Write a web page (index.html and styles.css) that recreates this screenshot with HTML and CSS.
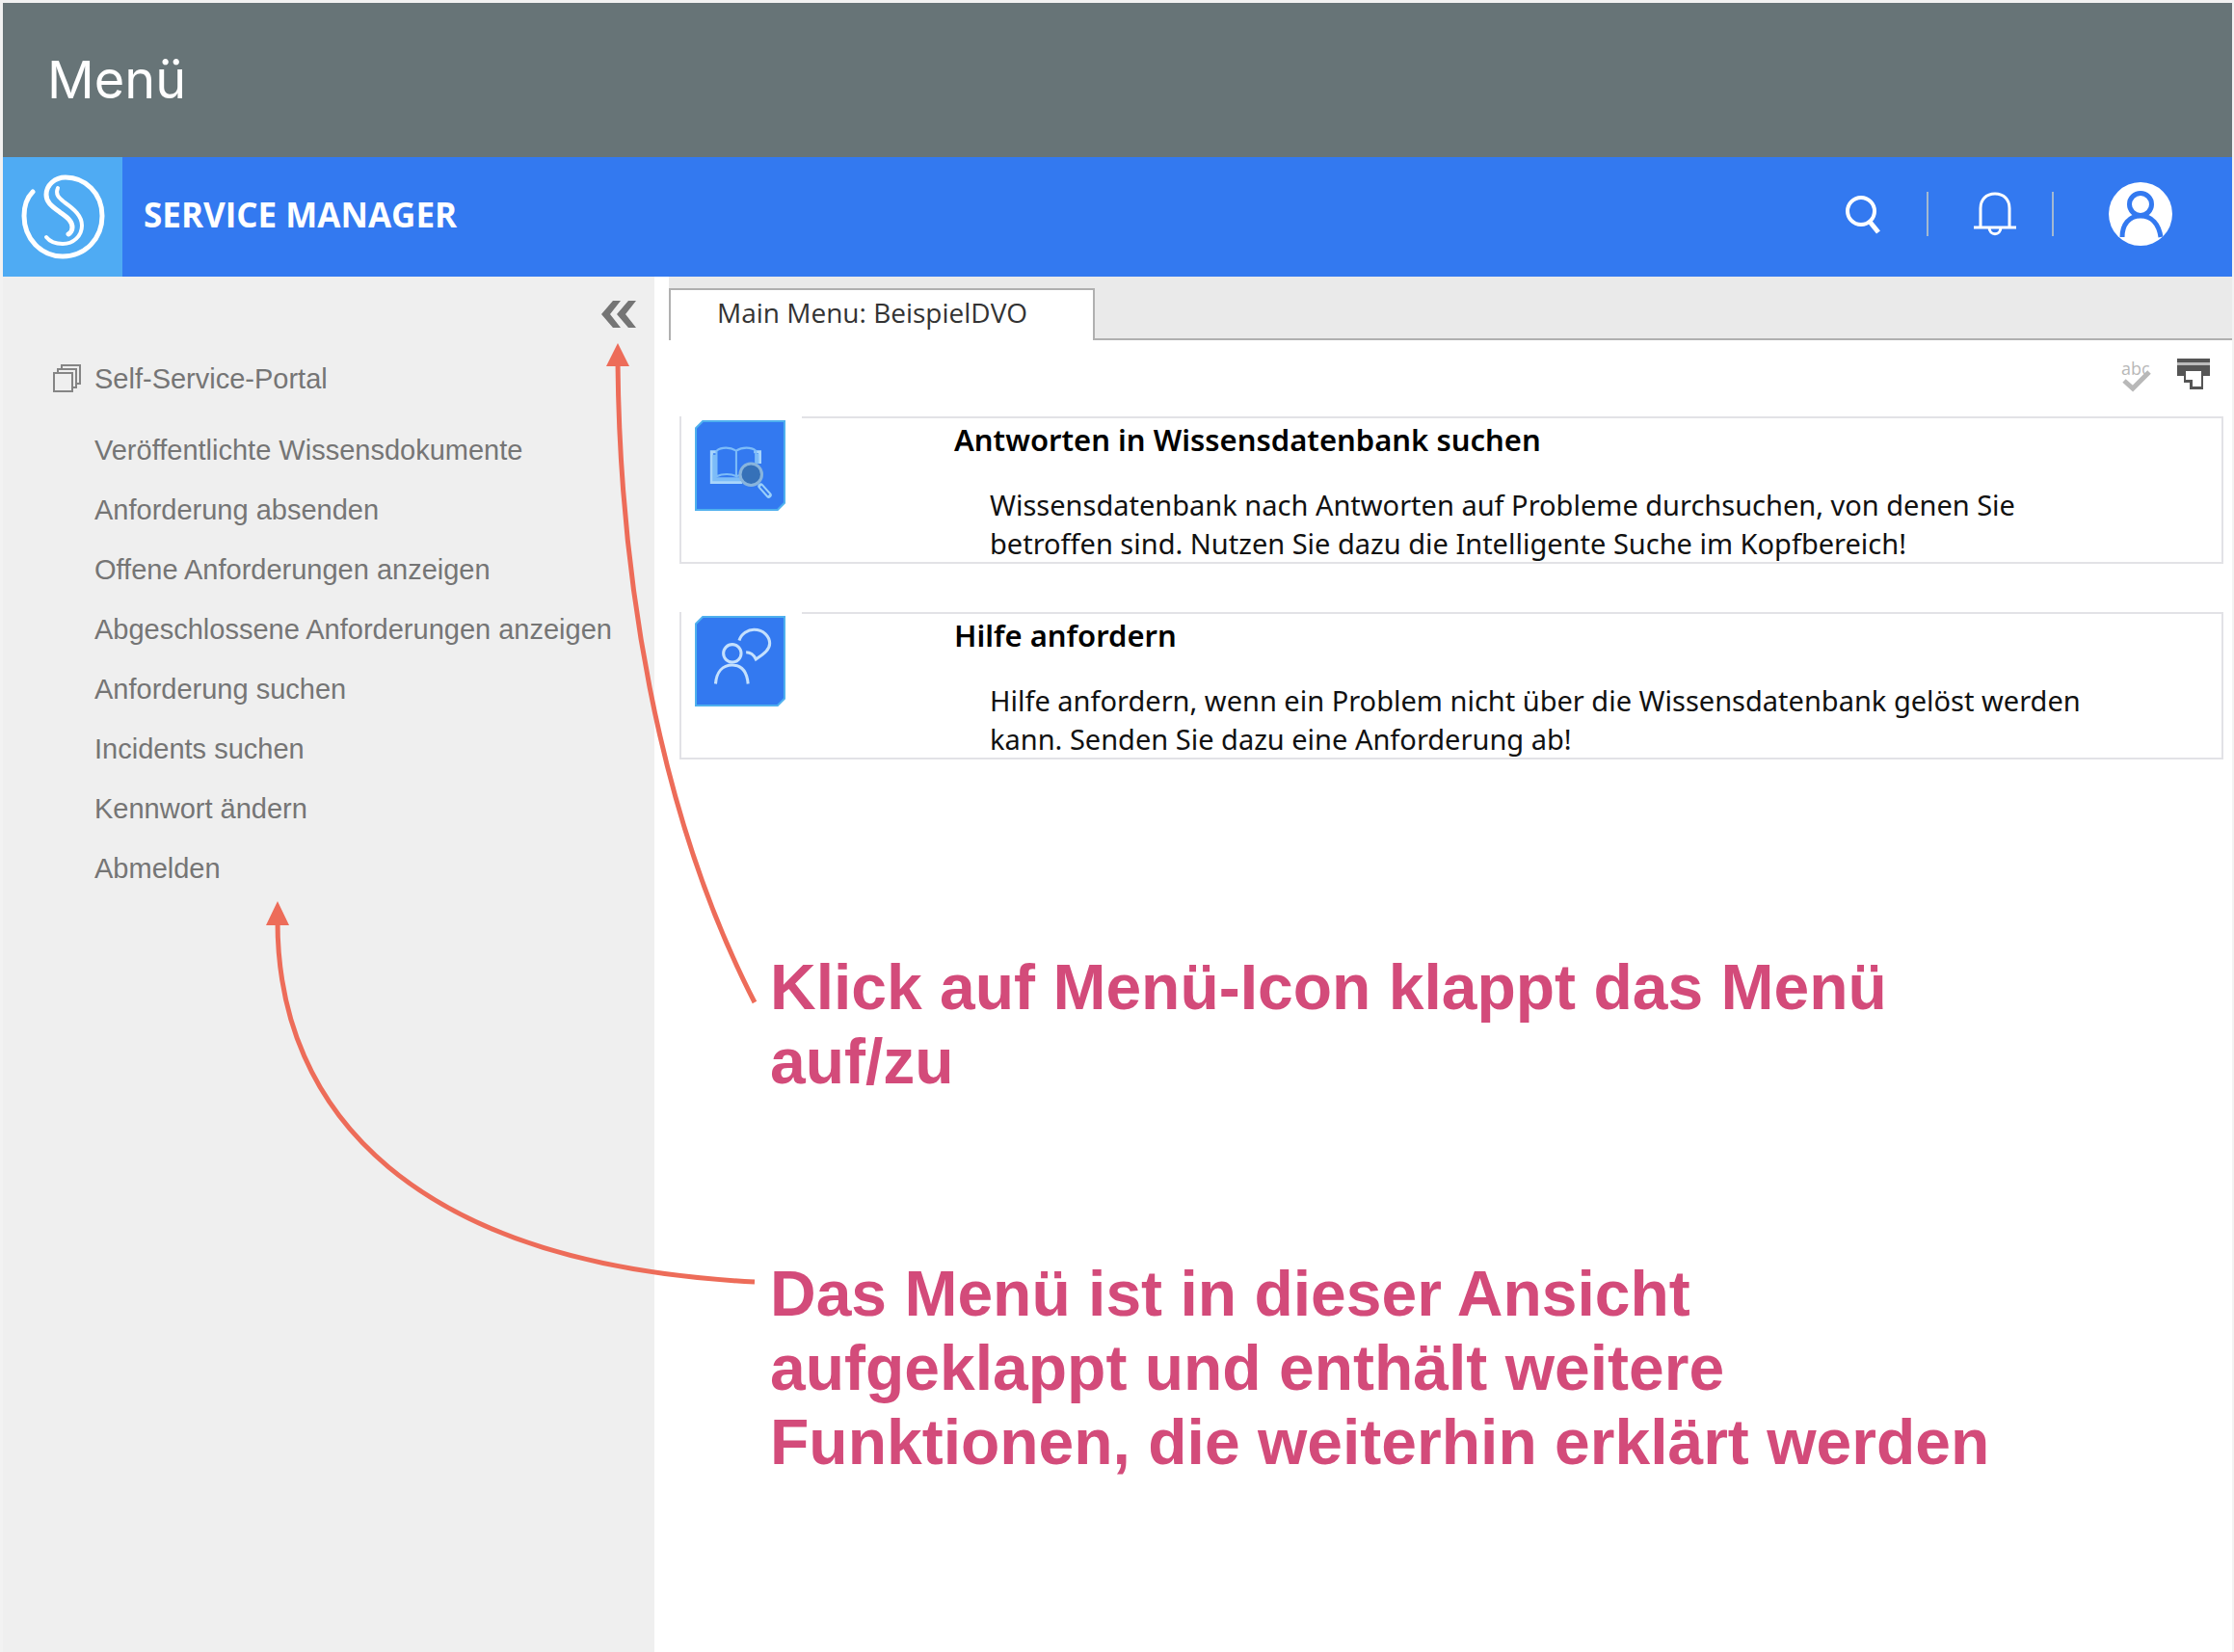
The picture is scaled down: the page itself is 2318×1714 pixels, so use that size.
FILE: index.html
```html
<!DOCTYPE html>
<html lang="de">
<head>
<meta charset="utf-8">
<title>Menü</title>
<link rel="stylesheet" href="styles.css">
</head>
<body>
<div class="page">
  <header class="slide-title"><h1>Menü</h1></header>

  <div class="app-bar">
    <a class="logo" href="#" aria-label="Startseite">
      <svg width="124" height="124" viewBox="0 0 124 124" fill="none" stroke="#fff" stroke-width="4" stroke-linecap="round">
        <path stroke-width="5" d="M31 36C24 43 22 52 22 61C22 85 40 103 62 103C86 103 103 84 103 61C103 37 85 21 65 21C54 21 45 29 45 39C45 47 51 51 59 57C67 63 72 66 72 73C72 76 70 79 68 80"/>
        <path d="M57 32C54 39 58 42 64 47C74 54 82 61 82 71C82 82 73 90 62 90C55 90 49 88 45 83"/>
      </svg>
    </a>
    <span class="app-name">SERVICE MANAGER</span>
    <div class="app-actions">
      <button class="icon-button search" type="button" aria-label="Suchen">
        <svg width="40" height="44" viewBox="0 0 40 44" fill="none" stroke="#fff"><circle cx="18" cy="19" r="14" stroke-width="4"/><path stroke-width="5" d="M27 30L36 41"/></svg>
      </button>
      <span class="divider"></span>
      <button class="icon-button bell" type="button" aria-label="Benachrichtigungen">
        <svg width="46" height="46" viewBox="0 0 46 46" fill="none" stroke="#fff" stroke-width="3"><path d="M8 36V17C8 8 14 2 23 2S38 8 38 17V36M1 37H45M17 37C17 46 29 46 29 37"/></svg>
      </button>
      <span class="divider"></span>
      <button class="icon-button avatar" type="button" aria-label="Benutzer">
        <svg width="66" height="66" viewBox="0 0 66 66" fill="none"><circle cx="33" cy="33" r="33" fill="#fff"/><g stroke="#3379f0" stroke-width="5"><circle cx="33" cy="23" r="11.500"/><path d="M14 57C14 44 21 35 33 35S52 44 54 57"/></g></svg>
      </button>
    </div>
  </div>

  <div class="workspace">
    <nav class="sidebar" aria-label="Menü">
      <button class="icon-button collapse" type="button" aria-label="Menü zuklappen">
        <svg width="36" height="28" viewBox="0 0 36 28" fill="#757575"><path d="M12 0H20L9 14L20 28H12L0 14ZM28 0H36L25 14L36 28H28L16 14Z"/></svg>
      </button>
      <a class="portal" href="#">
        <svg width="29" height="30" viewBox="0 0 29 30" fill="#efefef" stroke="#858585" stroke-width="2"><path d="M9 1H28V20H9Z"/><path d="M5 5H24V24H5Z"/><path d="M1 9H20V28H1Z"/></svg>
        Self-Service-Portal
      </a>
      <ul class="menu">
        <li><a href="#">Veröffentlichte Wissensdokumente</a></li>
        <li><a href="#">Anforderung absenden</a></li>
        <li><a href="#">Offene Anforderungen anzeigen</a></li>
        <li><a href="#">Abgeschlossene Anforderungen anzeigen</a></li>
        <li><a href="#">Anforderung suchen</a></li>
        <li><a href="#">Incidents suchen</a></li>
        <li><a href="#">Kennwort ändern</a></li>
        <li><a href="#">Abmelden</a></li>
      </ul>
    </nav>

    <main class="content">
      <div class="tabs"><button class="tab" type="button">Main Menu: BeispielDVO</button></div>
      <div class="toolbar">
        <button class="icon-button" type="button" aria-label="Rechtschreibung prüfen">
          <svg width="36" height="36" viewBox="0 0 36 36"><text class="abc" x="1" y="18">abc</text><path d="M4 24L13 32L30 15" fill="none" stroke="#b8b8b8" stroke-width="5"/></svg>
        </button>
        <button class="icon-button" type="button" aria-label="Drucken">
          <svg width="36" height="36" viewBox="0 0 36 36"><path fill="#555" d="M1 1H35V5H1ZM1 8H35V19H28V33H14V26H8V19H1Z"/><path fill="#bbb" d="M1 5H35V8H1Z"/><path fill="#fff" d="M10 14H26V30H17V23H10Z"/></svg>
        </button>
      </div>

      <section class="card">
        <span class="card-icon">
          <svg width="94" height="94" viewBox="0 0 92 92" fill="none">
            <path fill="#3379f0" stroke="#4fb0ee" stroke-width="2" d="M8 1H91V84L84 91H1V8Z"/>
            <path stroke="#a9d6fb" stroke-width="3" d="M22 32H17V63H48M60 32H66V44"/>
            <path stroke="#7dbcf8" stroke-width="4" d="M20 35V60H46M63 34V44"/>
            <path stroke="#7dbcf8" stroke-width="2" d="M42 31C36 27 27 27 22 31V57C28 54 37 54 42 57ZM42 31C48 27 57 27 62 31V43M42 57L48 55"/>
            <path stroke="#9bd0fa" stroke-width="6" stroke-linecap="round" d="M67 67L75 76"/>
            <path stroke="#3379f0" stroke-width="2" d="M67 67L75 76"/>
            <circle cx="57" cy="55" r="11" fill="#3671b8" stroke="#88b4dc" stroke-width="3"/>
          </svg>
        </span>
        <div class="card-text">
          <h2><a href="#">Antworten in Wissensdatenbank suchen</a></h2>
          <p>Wissensdatenbank nach Antworten auf Probleme durchsuchen, von denen Sie<br>betroffen sind. Nutzen Sie dazu die Intelligente Suche im Kopfbereich!</p>
        </div>
      </section>

      <section class="card">
        <span class="card-icon">
          <svg width="94" height="94" viewBox="0 0 92 92" fill="none">
            <path fill="#3379f0" stroke="#4fb0ee" stroke-width="2" d="M8 1H91V84L84 91H1V8Z"/>
            <g stroke="#c4e0fd" stroke-width="3"><circle cx="38" cy="38" r="9"/><path d="M21 69C22 57 28 50 38 50S53 57 54 69"/><path d="M45 25C47 18 54 14 60 14C70 14 76 21 76 28C76 34 71 38 62 44C60 40 57 37 52 37"/></g>
          </svg>
        </span>
        <div class="card-text">
          <h2><a href="#">Hilfe anfordern</a></h2>
          <p>Hilfe anfordern, wenn ein Problem nicht über die Wissensdatenbank gelöst werden<br>kann. Senden Sie dazu eine Anforderung ab!</p>
        </div>
      </section>

      <div class="notes">
        <p>Klick auf Menü-Icon klappt das Menü auf/zu</p>
        <p>Das Menü ist in dieser Ansicht aufgeklappt und enthält weitere Funktionen, die weiterhin erklärt werden</p>
      </div>
    </main>

    <svg class="arrows" width="800" height="1100" viewBox="0 287 800 1100" fill="none" stroke="#ed6c59" stroke-width="5" aria-hidden="true">
      <path d="M641 376C643 590 680 840 783 1040"/>
      <path d="M288 956C288 1155 430 1312 783 1330"/>
      <path fill="#ed6c59" stroke="none" d="M641 356L653 380H629ZM288 935L300 960H276Z"/>
    </svg>
  </div>
</div>
</body>
</html>
```
FILE: styles.css
```css
* { box-sizing: border-box; }

body {
  margin: 0;
  background: #f2f2f2;
  font-family: "Liberation Sans", Arial, sans-serif;
}

h1, h2, p, ul { margin: 0; padding: 0; }
a { color: inherit; text-decoration: none; }
svg { display: block; }

.page {
  display: flex;
  flex-direction: column;
  min-height: 100vh;
  padding: 3px 2px 0 3px;
}

.slide-title {
  display: flex;
  align-items: center;
  height: 160px;
  padding-left: 46px;
  background: #677477;
  color: #fff;
}

.slide-title h1 {
  font: 400 54px/64px Inter, sans-serif;
}

.app-bar {
  display: flex;
  align-items: center;
  height: 124px;
  background: #3379f0;
  color: #fff;
}

.logo { background: #4fabf3; }

.app-name {
  margin-left: 22px;
  padding-bottom: 4px;
  font: 700 35px/48px "Open Sans", sans-serif;
}

.app-actions {
  display: flex;
  align-items: center;
  margin-left: auto;
  padding: 0 62px 6px 0;
}

.icon-button {
  padding: 0;
  border: 0;
  background: none;
}

.divider {
  width: 2px;
  height: 46px;
  background: #a3b9d0;
}

.search { margin-right: 46px; }
.bell { margin: 0 36px 0 46px; }
.avatar { margin-left: 57px; }

.workspace {
  position: relative;
  display: flex;
  flex: 1;
}

.sidebar {
  display: flex;
  flex-direction: column;
  flex: 0 0 676px;
  background: #efefef;
  color: #757575;
  font-size: 29px;
  line-height: 32px;
}

.collapse {
  align-self: flex-end;
  margin: 25px 19px 37px 0;
}

.portal {
  display: flex;
  align-items: center;
  gap: 14px;
  padding-left: 52px;
}

.menu {
  display: grid;
  gap: 30px;
  padding: 42px 0 0 95px;
  list-style: none;
}

.content {
  flex: 1;
  min-width: 0;
  padding-left: 15px;
  background: #fff;
}

.tabs {
  display: flex;
  height: 66px;
  padding-top: 12px;
  background: #eaeaea;
  box-shadow: inset 0 -2px #b0b0b0;
}

.tab {
  padding: 0 68px 6px 48px;
  border: 2px solid #b0b0b0;
  border-bottom: 0;
  background: #fff;
  color: #333;
  font: 400 28px/40px "Open Sans", sans-serif;
}

.toolbar {
  display: flex;
  justify-content: flex-end;
  gap: 22px;
  padding: 18px 22px 0 0;
}

.card {
  position: relative;
  display: flex;
  height: 153px;
  margin: 0 9px 50px 11px;
  border: 2px solid #e2e2e6;
}

.toolbar + .card { margin-top: 25px; }

.card-icon {
  flex: 0 0 125px;
  height: 98px;
  margin-top: -2px;
  padding: 4px 0 0 14px;
  background: #fff;
}

.card-text {
  margin-left: 158px;
  padding-top: 2px;
  color: #111;
  font: 400 29px/40px "Noto Sans", sans-serif;
}

.card-text h2 {
  margin-bottom: 28px;
  color: #000;
  font-size: 31px;
  font-weight: 600;
  line-height: 40px;
}

.card-text p { padding-left: 37px; white-space: nowrap; }

.notes {
  display: grid;
  gap: 164px;
  max-width: 1480px;
  padding: 148px 100px 0 105px;
  color: #d34b7a;
  font-size: 66px;
  font-weight: 700;
  line-height: 77px;
}

.arrows {
  position: absolute;
  top: 0;
  left: -3px;
  pointer-events: none;
}

.abc {
  fill: #b8b8b8;
  font: 18px "Open Sans", sans-serif;
}
```
